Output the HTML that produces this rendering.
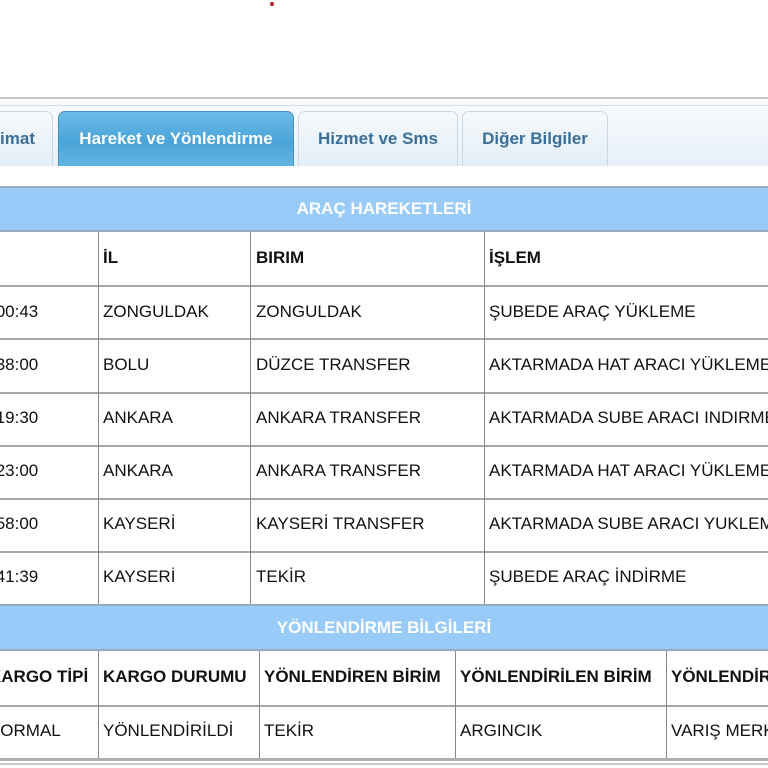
<!DOCTYPE html>
<html><head><meta charset="utf-8"><style>
*{margin:0;padding:0;box-sizing:border-box}
body{width:768px;height:768px;overflow:hidden;background:#fff;font-family:"Liberation Sans",Arial,sans-serif;position:relative}
.a{position:absolute}
.tab{position:absolute;top:111px;height:55px;border:1px solid #c8d8e6;border-bottom:none;border-radius:7px 7px 0 0;background:linear-gradient(#f5f9fc,#e4eef6);color:#3a6f99;font-weight:bold;font-size:17px;line-height:54px;text-align:center}
.tab.act{background:linear-gradient(#6cbbe8,#4aa4d9 55%,#62b4e2);color:#fff;border-color:#4a90c0}
.bar{position:absolute;left:0;width:768px;background:#99cbf8;color:#fff;font-weight:bold;font-size:17px;text-align:center;border-top:2px solid #9ab;border-bottom:2px solid #9ab}
.h{position:absolute;height:2px;left:0;width:768px;background:#a8a8a8}
.v{position:absolute;width:1px;background:#888}
.t{position:absolute;font-size:17px;color:#111;white-space:nowrap}
.b{font-weight:bold}
</style></head><body>
<div class="a" style="left:270px;top:2px;width:4px;height:4px;border-radius:2px;background:#b02030"></div>
<div class="a" style="left:0;top:97px;width:768px;height:2px;background:#c8c8c8"></div>
<div class="a" style="left:0;top:99px;width:768px;height:67px;background:linear-gradient(#fafcfe,#e6eff7)"></div>
<div class="a" style="left:0;top:105px;width:768px;height:1px;background:#d0dcea"></div>
<div class="tab" style="left:-60px;width:113px;text-align:right;padding-right:17px">Talimat</div>
<div class="tab act" style="left:58px;width:236px">Hareket ve Yönlendirme</div>
<div class="tab" style="left:298px;width:160px">Hizmet ve Sms</div>
<div class="tab" style="left:462px;width:146px">Diğer Bilgiler</div>
<div class="a" style="left:0;top:166px;width:768px;height:20px;background:#fff"></div>

<div class="bar" style="top:186px;height:46px;line-height:42px">ARAÇ HAREKETLERİ</div>
<div class="h" style="top:285px"></div><div class="h" style="top:338px"></div><div class="h" style="top:392px"></div><div class="h" style="top:445px"></div><div class="h" style="top:498px"></div><div class="h" style="top:551px"></div>
<div class="v" style="left:98px;top:232px;height:372px"></div>
<div class="v" style="left:250px;top:232px;height:372px"></div>
<div class="v" style="left:484px;top:232px;height:372px"></div>
<div class="t b" style="left:103px;top:248px">İL</div><div class="t b" style="left:256px;top:248px">BIRIM</div><div class="t b" style="left:489px;top:248px">İŞLEM</div>
<div class="t" style="left:-9px;top:302px">:00:43</div><div class="t" style="left:103px;top:302px">ZONGULDAK</div><div class="t" style="left:256px;top:302px">ZONGULDAK</div><div class="t" style="left:489px;top:302px">ŞUBEDE ARAÇ YÜKLEME</div>
<div class="t" style="left:-9px;top:355px">:38:00</div><div class="t" style="left:103px;top:355px">BOLU</div><div class="t" style="left:256px;top:355px">DÜZCE TRANSFER</div><div class="t" style="left:489px;top:355px">AKTARMADA HAT ARACI YÜKLEME</div>
<div class="t" style="left:-9px;top:408px">:19:30</div><div class="t" style="left:103px;top:408px">ANKARA</div><div class="t" style="left:256px;top:408px">ANKARA TRANSFER</div><div class="t" style="left:489px;top:408px">AKTARMADA SUBE ARACI INDIRME</div>
<div class="t" style="left:-9px;top:461px">:23:00</div><div class="t" style="left:103px;top:461px">ANKARA</div><div class="t" style="left:256px;top:461px">ANKARA TRANSFER</div><div class="t" style="left:489px;top:461px">AKTARMADA HAT ARACI YÜKLEME</div>
<div class="t" style="left:-9px;top:514px">:58:00</div><div class="t" style="left:103px;top:514px">KAYSERİ</div><div class="t" style="left:256px;top:514px">KAYSERİ TRANSFER</div><div class="t" style="left:489px;top:514px">AKTARMADA SUBE ARACI YUKLEME</div>
<div class="t" style="left:-9px;top:567px">:41:39</div><div class="t" style="left:103px;top:567px">KAYSERİ</div><div class="t" style="left:256px;top:567px">TEKİR</div><div class="t" style="left:489px;top:567px">ŞUBEDE ARAÇ İNDİRME</div>

<div class="bar" style="top:604px;height:47px;line-height:43px">YÖNLENDİRME BİLGİLERİ</div>
<div class="h" style="top:705px"></div>
<div class="a" style="left:0;top:758px;width:768px;height:3px;background:#b0b0b0"></div>
<div class="a" style="left:0;top:763px;width:768px;height:2px;background:#c8c8c8"></div>
<div class="v" style="left:98px;top:651px;height:107px"></div>
<div class="v" style="left:259px;top:651px;height:107px"></div>
<div class="v" style="left:455px;top:651px;height:107px"></div>
<div class="v" style="left:666px;top:651px;height:107px"></div>
<div class="t b" style="left:-11px;top:667px">KARGO TİPİ</div><div class="t b" style="left:103px;top:667px">KARGO DURUMU</div><div class="t b" style="left:264px;top:667px">YÖNLENDİREN BİRİM</div><div class="t b" style="left:460px;top:667px">YÖNLENDİRİLEN BİRİM</div><div class="t b" style="left:671px;top:667px">YÖNLENDİREN</div>
<div class="t" style="left:-12px;top:721px">NORMAL</div><div class="t" style="left:103px;top:721px">YÖNLENDİRİLDİ</div><div class="t" style="left:264px;top:721px">TEKİR</div><div class="t" style="left:460px;top:721px">ARGINCIK</div><div class="t" style="left:671px;top:721px">VARIŞ MERKEZİ</div>
</body></html>
